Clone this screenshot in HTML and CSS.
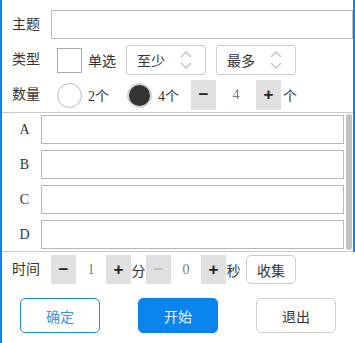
FILE: index.html
```html
<!DOCTYPE html>
<html lang="zh-CN">
<head>
    <meta charset="UTF-8">
    <title>抽题设置</title>
    <link rel="stylesheet" href="styles.css">
</head>
<body>
    <div class="app">
        <div class="upper">
            <div class="row row-title">
                <span class="label">主题</span>
                <input class="text-input" type="text">
            </div>
            <div class="row row-type">
                <span class="label">类型</span>
                <span class="checkbox"></span>
                <span class="check-text">单选</span>
                <div class="select">
                    <span>至少</span>
                    <svg class="arrows" width="14" height="24" viewBox="0 0 14 24">
                        <polyline points="2,9 7,4 12,9" fill="none" stroke="#c8c8c8" stroke-width="1.6"/>
                        <polyline points="2,15 7,20 12,15" fill="none" stroke="#c8c8c8" stroke-width="1.6"/>
                    </svg>
                </div>
                <div class="select select-max">
                    <span>最多</span>
                    <svg class="arrows" width="14" height="24" viewBox="0 0 14 24">
                        <polyline points="2,9 7,4 12,9" fill="none" stroke="#c8c8c8" stroke-width="1.6"/>
                        <polyline points="2,15 7,20 12,15" fill="none" stroke="#c8c8c8" stroke-width="1.6"/>
                    </svg>
                </div>
            </div>
            <div class="row row-count">
                <span class="label">数量</span>
                <span class="radio"></span>
                <span class="radio-text">2个</span>
                <span class="radio checked"></span>
                <span class="radio-text">4个</span>
                <div class="stepper stepper-count">
                    <span class="step-btn">&minus;</span>
                    <span class="step-val">4</span>
                    <span class="step-btn">+</span>
                </div>
                <span class="unit">个</span>
            </div>

            <div class="options">
                <div class="option-list">
                    <div class="option"><span class="opt-letter">A</span><input class="opt-input" type="text"></div>
                    <div class="option"><span class="opt-letter">B</span><input class="opt-input" type="text"></div>
                    <div class="option"><span class="opt-letter">C</span><input class="opt-input" type="text"></div>
                    <div class="option"><span class="opt-letter">D</span><input class="opt-input" type="text"></div>
                </div>
                <div class="scroll-thumb"></div>
            </div>
        </div>

        <div class="row row-time">
            <span class="label">时间</span>
            <div class="stepper stepper-time">
                <span class="step-btn">&minus;</span>
                <span class="step-val">1</span>
                <span class="step-btn">+</span>
            </div>
            <span class="unit-time">分</span>
            <div class="stepper stepper-time">
                <span class="step-btn disabled">&minus;</span>
                <span class="step-val">0</span>
                <span class="step-btn">+</span>
            </div>
            <span class="unit-time">秒</span>
            <button class="btn-collect">收集</button>
        </div>

        <div class="actions">
            <button class="btn btn-ok">确定</button>
            <button class="btn btn-start">开始</button>
            <button class="btn btn-exit">退出</button>
        </div>
    </div>
</body>
</html>
```

FILE: styles.css
```css
html, body {
    margin: 0;
    padding: 0;
    background-color: #fff;
}

body {
    font-family: "Liberation Serif", "Noto Sans CJK SC", serif;
    font-size: 14px;
    color: #333;
    width: 355px;
    height: 343px;
    overflow: hidden;
}

.app {
    border-left: 2px solid #0b84ee;
    height: 343px;
    box-sizing: border-box;
}

.upper {
    border-right: 2px solid #0b84ee;
    padding-top: 10px;
}

.row {
    display: flex;
    align-items: center;
    padding-left: 10px;
}

.label {
    width: 39px;
    flex-shrink: 0;
    line-height: 20px;
}

.row-title {
    height: 29px;
}

.text-input {
    flex: 1;
    height: 29px;
    box-sizing: border-box;
    border: 1px solid #bbb;
    margin: 0;
    padding: 0 6px;
    outline: none;
    font: inherit;
}

/* 类型 */
.row-type {
    height: 30px;
    margin-top: 6px;
}

.checkbox {
    width: 25px;
    height: 25px;
    box-sizing: border-box;
    border: 1px solid #aaa;
    margin-left: 6px;
}

.check-text {
    margin-left: 6px;
    width: 28px;
}

.select {
    width: 80px;
    height: 30px;
    box-sizing: border-box;
    border: 1px solid #ccc;
    border-radius: 3px;
    margin-left: 10px;
    padding: 0 12px 0 10px;
    display: flex;
    align-items: center;
    justify-content: space-between;
}

.arrows {
    display: block;
}

/* 数量 */
.row-count {
    height: 30px;
    margin-top: 5px;
}

.radio {
    width: 25px;
    height: 25px;
    box-sizing: border-box;
    border: 1px solid #bbb;
    border-radius: 50%;
    margin-left: 6px;
    background-color: #fff;
}

.radio.checked {
    background-color: #333;
    border: 2px solid #d4d4d4;
    margin-left: 16px;
}

.radio-text {
    margin-left: 6px;
    width: 23px;
}

.stepper {
    display: flex;
    height: 30px;
    background-color: #e0e0e0;
}

.stepper-count {
    margin-left: 10px;
}

.step-btn {
    width: 25px;
    display: flex;
    align-items: center;
    justify-content: center;
    font-family: "Liberation Sans", sans-serif;
    font-weight: bold;
    font-size: 17px;
    color: #222;
}

.step-btn.disabled {
    color: #bbb;
}

.step-val {
    width: 40px;
    background-color: #fff;
    display: flex;
    align-items: center;
    justify-content: center;
    color: #7a7a7a;
}

.unit {
    margin-left: 2px;
}

/* 选项 */
.options {
    display: flex;
    margin-top: 2px;
    border-top: 1px solid #ccc;
    border-bottom: 1px solid #ccc;
    padding: 2px 1px 2px 0;
}

.option-list {
    flex: 1;
    display: flex;
    flex-direction: column;
    gap: 6px;
    padding-left: 10px;
}

.option {
    display: flex;
    align-items: center;
    height: 29px;
}

.opt-letter {
    width: 25px;
    margin-right: 4px;
    text-align: center;
}

.opt-input {
    flex: 1;
    height: 29px;
    box-sizing: border-box;
    border: 1px solid #b8b8b8;
    margin: 0;
    outline: none;
    font: inherit;
}

.scroll-thumb {
    width: 6px;
    margin: -1px 0 -1px 2px;
    background-color: #c1c1c1;
    border-radius: 3px;
}

/* 时间 */
.row-time {
    height: 29px;
    margin-top: 3px;
}

.stepper-time {
    height: 29px;
}

.stepper-time .step-val {
    width: 30px;
}

.unit-time {
    width: 15px;
    text-align: center;
}

.btn-collect {
    margin: 0 0 0 5px;
    width: 50px;
    height: 29px;
    border: 1px solid #ccc;
    border-radius: 5px;
    background-color: #fff;
    font: inherit;
    color: #333;
    padding: 0;
}

/* 按钮 */
.actions {
    display: flex;
    gap: 38px;
    padding-left: 18px;
    margin-top: 14px;
}

.btn {
    width: 80px;
    height: 35px;
    border-radius: 5px;
    font: inherit;
    padding: 0;
    cursor: pointer;
    background-color: #fff;
}

.btn-ok {
    border: 1px solid #1a8cf0;
    color: #3d95e8;
}

.btn-start {
    border: 1px solid #0b84ee;
    background-color: #0b84ee;
    color: #e8f3ff;
}

.btn-exit {
    border: 1px solid #ccc;
    color: #333;
}
```
